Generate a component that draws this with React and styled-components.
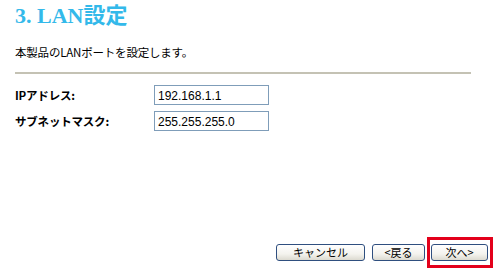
import React from "react";
import styled, { createGlobalStyle } from "styled-components";

const GlobalStyle = createGlobalStyle`
  html, body {
    margin: 0;
    padding: 0;
    background: #ffffff;
  }
  body {
    font-family: "Noto Sans CJK JP", "Liberation Sans", sans-serif;
    color: #000000;
  }
`;

const Page = styled.div`
  width: 500px;
  height: 275px;
  box-sizing: border-box;
  padding: 4px 29px 7px 15px;
  display: flex;
  flex-direction: column;
  overflow: hidden;
`;

const Title = styled.h1`
  margin: 0;
  font-family: "Liberation Serif", "Noto Sans CJK JP", serif;
  font-size: 22px;
  font-weight: bold;
  line-height: 24px;
  color: #33b9ea;
`;

const Lead = styled.p`
  margin: 17px 0 0;
  font-size: 11.5px;
  line-height: 14px;
  letter-spacing: -0.2px;
`;

const Rule = styled.hr`
  margin: 13px 0 0;
  height: 2px;
  border: none;
  background: #c4c2b4;
`;

const Form = styled.div`
  margin-top: 11px;
  display: flex;
  flex-direction: column;
  gap: 6px;
`;

const Row = styled.div`
  display: flex;
  align-items: center;
`;

const Label = styled.label`
  width: 139px;
  font-size: 11.5px;
  font-weight: bold;
  letter-spacing: -0.2px;
`;

const Field = styled.input`
  width: 115px;
  height: 20px;
  box-sizing: border-box;
  border: 1px solid #7f9db9;
  padding: 1px 3px 0;
  font-family: "Liberation Sans", sans-serif;
  font-size: 12px;
  color: #000;
  outline: none;
`;

const Footer = styled.div`
  margin-top: auto;
  display: flex;
  justify-content: flex-end;
  align-items: center;
  margin-right: -22px;
`;

const Highlight = styled.div`
  border: 3px solid #e3001b;
  padding: 4px 2px 4px 1px;
  margin-left: 2px;
  display: flex;
`;

const Button = styled.button`
  width: ${(p) => p.w}px;
  height: 17px;
  box-sizing: border-box;
  padding: 0;
  margin-right: ${(p) => p.gap || 0}px;
  border: 1px solid #2f4f7f;
  border-radius: 3px;
  background: linear-gradient(#ffffff, #f4f3ee 60%, #dcdad0);
  font-family: "Noto Sans CJK JP", sans-serif;
  font-size: 11px;
  line-height: 15px;
  color: #000;
`;

export default function App() {
  return (
    <>
      <GlobalStyle />
      <Page>
        <Title>3. LAN設定</Title>
        <Lead>本製品のLANポートを設定します。</Lead>
        <Rule />
        <Form>
          <Row>
            <Label>IPアドレス:</Label>
            <Field defaultValue="192.168.1.1" />
          </Row>
          <Row>
            <Label>サブネットマスク:</Label>
            <Field defaultValue="255.255.255.0" />
          </Row>
        </Form>
        <Footer>
          <Button w={89} gap={7}>キャンセル</Button>
          <Button w={53}>&lt;戻る</Button>
          <Highlight>
            <Button w={57}>次へ&gt;</Button>
          </Highlight>
        </Footer>
      </Page>
    </>
  );
}
